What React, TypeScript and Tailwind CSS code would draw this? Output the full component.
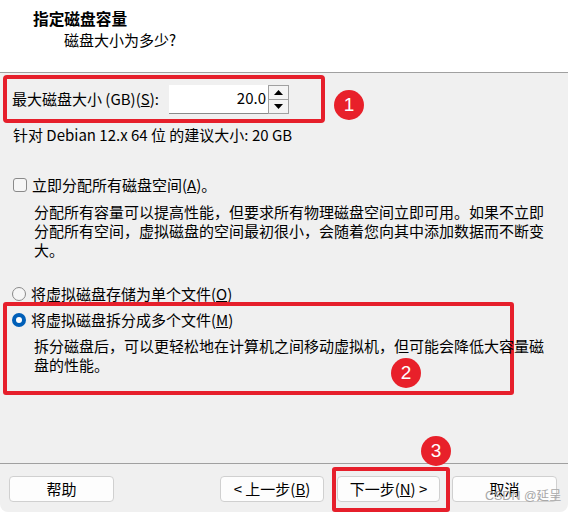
import React from "react";

const red = "border-[#e61f2b]";

function Badge({ n, className }: { n: string; className: string }) {
  return (
    <div
      className={`absolute w-[30px] h-[30px] rounded-full bg-[#e8202a] text-white flex items-center justify-center text-[19px] font-['Liberation_Sans',sans-serif] ${className}`}
    >
      {n}
    </div>
  );
}

function Radio({ checked }: { checked?: boolean }) {
  if (checked) {
    return (
      <div className="w-[14px] h-[14px] rounded-full bg-[#005fb8] flex items-center justify-center shrink-0">
        <div className="w-[6px] h-[6px] rounded-full bg-white" />
      </div>
    );
  }
  return <div className="w-[14px] h-[14px] rounded-full border border-[#8a8a8a] bg-[#f6f6f6] shrink-0" />;
}

function Btn({ children, className = "" }: { children: React.ReactNode; className?: string }) {
  return (
    <div
      className={`h-[26px] rounded-[4px] border border-[#d0d0d0] bg-[#fdfdfd] flex items-center justify-center text-[15px] leading-[20px] ${className}`}
    >
      {children}
    </div>
  );
}

export default function App() {
  return (
    <div className="w-[568px] h-[512px] bg-white">
      <div className="relative w-[568px] h-[512px] bg-[#f0f0f0] flex flex-col rounded-b-[8px] overflow-hidden text-black font-['Noto_Sans_CJK_SC',sans-serif]">
        {/* header */}
        <div className="h-[73px] bg-white border-b border-[#a0a0a0] pt-[9px] pl-[33px] shrink-0">
          <div className="text-[15.7px] leading-[20px] font-bold">指定磁盘容量</div>
          <div className="text-[15px] leading-[20px] mt-[1px] pl-[31px]">磁盘大小为多少?</div>
        </div>

        {/* size box */}
        <div className={`mt-[2px] ml-[3px] w-[322px] h-[48px] border-4 ${red} rounded-[4px] flex items-center pl-[5px] shrink-0`}>
          <span className="text-[15px] w-[158px] whitespace-nowrap">
            最大磁盘大小 (GB)(<span className="underline">S</span>):
          </span>
          <div className="flex h-[29px] ml-[-1px]">
            <div className="w-[99px] bg-white border-b border-[#8a8a8a] flex items-center justify-end pr-[2px] text-[15px]">
              20.0
            </div>
            <div className="w-[21px] flex flex-col border border-[#a0a0a0] bg-[#f4f4f4]">
              <div className="flex-1 flex items-center justify-center border-b border-[#a0a0a0]">
                <svg width="9" height="5" viewBox="0 0 9 5">
                  <polygon points="0,5 9,5 4.5,0" fill="#000" />
                </svg>
              </div>
              <div className="flex-1 flex items-center justify-center">
                <svg width="9" height="5" viewBox="0 0 9 5">
                  <polygon points="0,0 9,0 4.5,5" fill="#000" />
                </svg>
              </div>
            </div>
          </div>
        </div>

        <div className="mt-[2px] pl-[13px] text-[15px] leading-[20px]">针对 Debian 12.x 64 位 的建议大小: 20 GB</div>

        {/* allocate */}
        <div className="mt-[30px] pl-[13px] flex items-center gap-[5px] text-[15px] leading-[20px]">
          <div className="w-[14px] h-[14px] rounded-[3px] border border-[#8a8a8a] bg-[#f6f6f6] shrink-0" />
          <span>
            立即分配所有磁盘空间(<span className="underline">A</span>)。
          </span>
        </div>
        <div className="mt-[7px] pl-[34px] text-[15px] leading-[19px] whitespace-nowrap">
          <div>分配所有容量可以提高性能，但要求所有物理磁盘空间立即可用。如果不立即</div>
          <div>分配所有空间，虚拟磁盘的空间最初很小，会随着您向其中添加数据而不断变</div>
          <div>大。</div>
        </div>

        {/* single file */}
        <div className="mt-[27px] pl-[12px] flex items-center gap-[5px] text-[15px] leading-[16px]">
          <Radio />
          <span>
            将虚拟磁盘存储为单个文件(<span className="underline">O</span>)
          </span>
        </div>

        {/* split box */}
        <div className={`ml-[3px] w-[511px] h-[93px] border-4 ${red} rounded-[3px] pt-[4px] pl-[5px] shrink-0`}>
          <div className="flex items-center gap-[5px] text-[15px] leading-[20px]">
            <Radio checked />
            <span>
              将虚拟磁盘拆分成多个文件(<span className="underline">M</span>)
            </span>
          </div>
          <div className="mt-[6px] pl-[22px] text-[15px] leading-[19px] whitespace-nowrap">
            <div>拆分磁盘后，可以更轻松地在计算机之间移动虚拟机，但可能会降低大容量磁</div>
            <div>盘的性能。</div>
          </div>
        </div>

        <div className="flex-1" />

        {/* footer */}
        <div className="h-[49px] border-t border-[#a0a0a0] flex items-start pt-[12px] pl-[9px] pr-[11px] shrink-0">
          <Btn className="w-[105px]">帮助</Btn>
          <div className="ml-auto flex gap-[13px]">
            <Btn className="w-[104px]">
              &lt; 上一步(<span className="underline">B</span>)
            </Btn>
            <Btn className="w-[103px]">
              下一步(<span className="underline">N</span>) &gt;
            </Btn>
            <Btn className="w-[105px] ml-[-1px]">取消</Btn>
          </div>
        </div>

        {/* annotations */}
        <Badge n="1" className="left-[334px] top-[90px]" />
        <Badge n="2" className="left-[391px] top-[358px]" />
        <div className={`absolute left-[332px] top-[467px] w-[118px] h-[45px] border-4 ${red} rounded-[3px]`} />
        <Badge n="3" className="left-[421px] top-[436px]" />
        <div className="absolute left-[485px] top-[488px] text-[12.5px] leading-[16px] text-[#a8a8a8] font-['Liberation_Sans','Noto_Sans_CJK_SC',sans-serif]">
          CSDN @延呈
        </div>
      </div>
    </div>
  );
}
